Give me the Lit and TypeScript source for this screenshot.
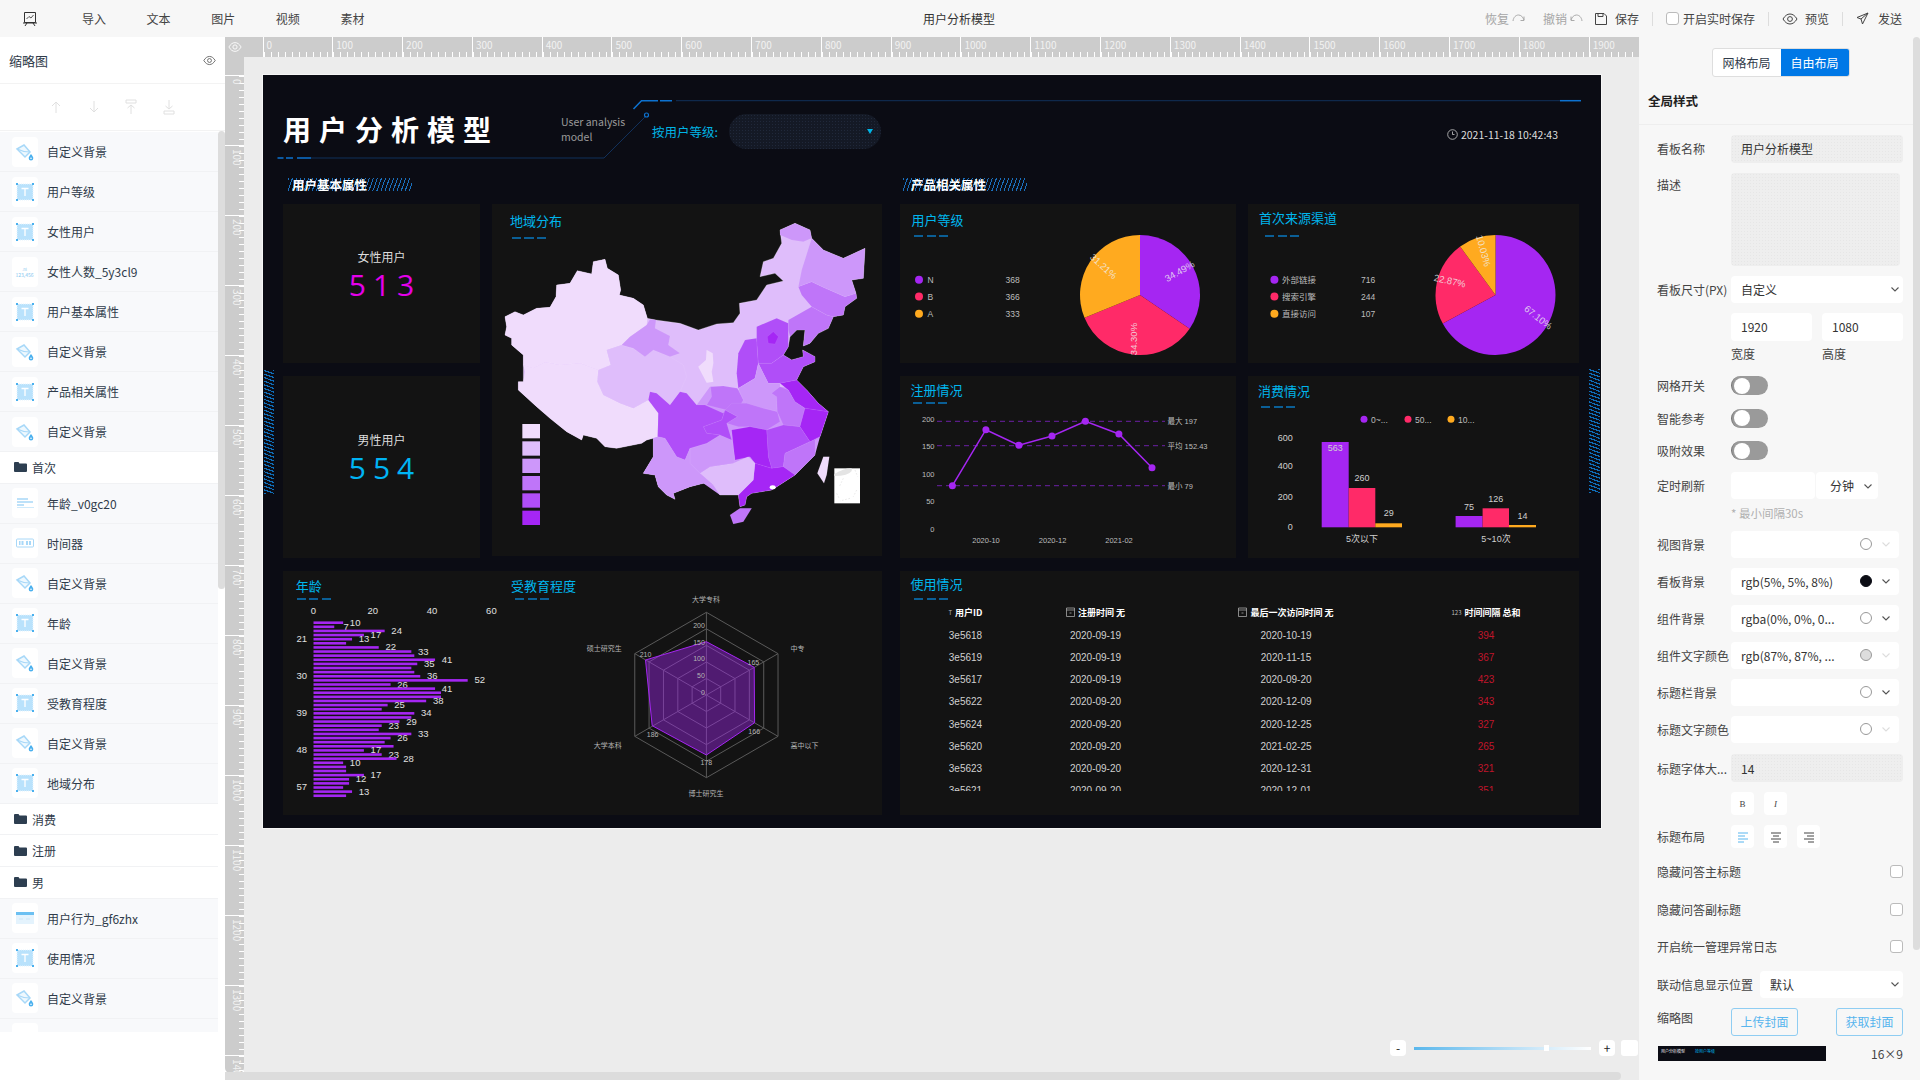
import { LitElement, html, css, svg } from "lit";
import { customElement } from "lit/decorators.js";

const PURPLE = "#a526f2";
const PINK = "#ff2a68";
const ORANGE = "#ffaa1f";
const MAP_COLORS = ["#f0dcfc", "#dfbdfb", "#cd97fa", "#bf75f9", "#b04ef8", "#a526f5"];

// left layer list
const LAYERS: [string, string][] = [
  ["bg", "自定义背景"], ["t", "用户等级"], ["t", "女性用户"], ["num", "女性人数_5y3cl9"],
  ["t", "用户基本属性"], ["bg", "自定义背景"], ["t", "产品相关属性"], ["bg", "自定义背景"],
  ["folder", "首次"], ["line", "年龄_v0gc20"], ["timer", "时间器"], ["bg", "自定义背景"],
  ["t", "年龄"], ["bg", "自定义背景"], ["t", "受教育程度"], ["bg", "自定义背景"], ["t", "地域分布"],
  ["folder", "消费"], ["folder", "注册"], ["folder", "男"],
  ["table", "用户行为_gf6zhx"], ["t", "使用情况"], ["bg", "自定义背景"], ["blank", ""],
];

const layerIcon = (k: string) => {
  switch (k) {
    case "bg":
      return svg`<svg width="20" height="20" viewBox="0 0 20 20"><path d="M2 7 9 3l6 7-5 5z" fill="#eef8fe" stroke="#a8d8f8" stroke-width="1.500"/><path d="M2 7q6 3 13 3" fill="none" stroke="#a8d8f8" stroke-width="1.200"/><path d="M16 12c1.500 2 2.300 3 2.300 4.200a2.300 2.300 0 0 1-4.600 0c0-1.200.8-2.200 2.300-4.200z" fill="#4ab0ee"/><circle cx="16" cy="16.300" r=".8" fill="#fff"/></svg>`;
    case "t":
      return svg`<svg width="20" height="20" viewBox="0 0 20 20"><rect x="2" y="2" width="16" height="16" fill="#b9e2fc" stroke="#e4f3fd" stroke-dasharray="1 1"/><path d="M6.500 6.500h7M10 6.500v7.500" stroke="#fff" stroke-width="1.300"/><path d="M1 1h2v2H1zM17 1h2v2h-2zM1 17h2v2H1zM17 17h2v2h-2z" fill="#4ab0ee"/></svg>`;
    case "num":
      return html`<span class="numico"><small>.nl</small>123,456</span>`;
    case "line":
      return svg`<svg width="20" height="20" viewBox="0 0 20 20"><path d="M2 6h11M2 9h16M2 12h7" stroke="#a8d8f8" stroke-width="1.600"/><path d="M2 14.500h17" stroke="#cfeafb"/></svg>`;
    case "timer":
      return svg`<svg width="20" height="20" viewBox="0 0 20 20"><rect x="1.500" y="6" width="17" height="8" rx="1" fill="none" stroke="#a8d8f8"/><path d="M4 8h4.500v4H4zM11 8h5v4h-5z" fill="#a8d8f8"/><path d="M6 8v4M13.500 8v4" stroke="#fff"/></svg>`;
    case "table":
      return svg`<svg width="20" height="20" viewBox="0 0 20 20"><rect x="1" y="4" width="18" height="12" fill="#e4f3fd"/><rect x="1" y="4" width="18" height="3" fill="#6cc0f2"/><path d="M4 11h4M11 11h4" stroke="#cfe6f6"/></svg>`;
    default:
      return null;
  }
};

const RULER_X = Array.from({ length: 20 }, (_, i) => i * 100);
const RULER_Y = Array.from({ length: 15 }, (_, i) => i * 100);

// map outline and polygons, traced in a 1200x1020 space
const OUTLINE =
  "45,350 75,335 100,345 140,325 180,322 198,290 200,255 240,250 262,212 305,222 310,185 345,178 352,205 385,225 392,270 388,285 430,295 460,315 472,355 498,360 570,370 625,390 680,372 730,368 750,340 748,310 800,300 830,255 880,243 855,220 810,230 820,185 850,175 875,130 870,90 915,70 960,90 965,115 1000,150 1060,175 1125,145 1120,235 1085,240 1098,280 1100,295 1065,320 1060,345 1030,350 1015,385 985,400 960,430 940,438 945,390 920,390 900,410 895,440 880,465 905,480 940,470 938,450 975,470 975,485 940,500 920,540 950,570 985,610 1015,635 990,710 975,720 975,765 915,825 845,870 785,880 770,890 765,915 750,920 745,885 690,885 670,855 640,850 600,860 550,880 555,898 530,885 505,860 495,825 460,820 490,770 490,715 470,720 455,730 380,745 345,740 320,715 280,705 275,720 230,695 180,655 140,620 85,570 85,545 100,545 100,465 65,435 65,415 45,405 50,380";
const SOUTH =
  "660,560 750,570 870,560 950,570 985,610 1015,635 990,710 975,765 915,825 845,870 745,885 690,885 640,850 600,860 550,880 505,860 495,825 460,820 490,770 490,715 505,640 540,615 620,615";
const PROVINCES: [number, string][] = [
  [0, "45,350 75,335 100,345 140,325 180,322 198,290 200,255 240,250 262,212 305,222 310,185 345,178 352,205 385,225 392,270 388,285 430,295 460,315 472,355 470,375 420,410 395,435 350,450 362,495 325,510 270,490 210,495 165,487 130,505 100,495 100,465 65,435 65,415 45,405 50,380"],
  [0, "100,495 130,505 165,487 210,495 270,490 325,510 322,545 340,585 390,610 430,625 475,600 505,640 503,710 470,720 455,730 380,745 345,740 320,715 280,705 275,720 230,695 180,655 140,620 85,570 85,545 100,545 105,515"],
  [1, "350,450 395,435 430,445 465,470 490,450 540,470 580,495 590,530 570,575 540,615 500,580 480,575 475,600 430,625 390,610 340,585 322,545 325,510 362,495"],
  [2, "395,435 420,410 470,375 480,358 498,360 495,385 540,408 535,435 570,460 540,470 490,450 465,470 430,445"],
  [0, "650,450 668,460 670,490 665,515 670,545 650,548 625,500 648,480"],
  [3, "662,560 700,558 742,565 760,600 745,625 710,630 650,615 665,590"],
  [4, "765,420 800,415 805,490 795,535 745,565 740,520 745,460"],
  [4, "800,380 860,355 895,370 895,440 880,465 845,490 805,490 800,420"],
  [5, "832,410 850,395 865,410 855,432 835,430"],
  [3, "895,360 965,320 1010,345 1030,350 1015,385 985,400 960,430 940,438 945,390 920,390 900,410 895,390"],
  [3, "925,260 965,245 1000,262 1065,290 1098,280 1100,295 1065,320 1060,345 1030,350 1010,345 965,320 935,285"],
  [2, "870,90 915,70 960,90 965,115 940,125 905,120 870,105"],
  [2, "965,115 1000,150 1060,175 1125,145 1120,235 1085,240 1098,280 1065,290 1000,262 965,245 925,260 935,210"],
  [4, "845,490 880,465 905,480 940,470 938,450 975,470 975,485 940,500 920,540 870,550 835,550 805,490"],
  [2, "745,565 795,535 805,490 835,550 870,550 870,560 860,590 862,635 820,625 770,610 760,600"],
  [3, "725,610 770,610 820,625 862,635 870,665 830,690 780,680 745,680 710,670 742,650 705,630"],
  [5, "870,550 920,540 950,570 985,610 1015,635 945,625 915,605 895,570"],
  [3, "845,580 870,560 895,570 915,605 945,625 930,680 880,675 862,635 860,590"],
  [5, "945,625 1015,635 990,710 960,725 930,680"],
  [4, "830,690 880,675 930,680 960,725 885,760 880,800 845,805 835,770"],
  [3, "960,725 990,710 975,720 975,765 915,825 880,800 885,760"],
  [5, "725,690 780,680 830,690 835,770 845,805 795,790 780,770 735,780"],
  [5, "795,790 845,805 880,800 915,825 845,870 785,880 770,890 765,915 750,920 745,885 790,840"],
  [3, "750,925 785,925 760,965 730,972 720,945"],
  [1, "630,820 660,800 730,790 775,770 795,790 790,840 745,885 690,885 670,855"],
  [2, "600,745 650,730 690,705 725,720 735,780 730,790 660,800 630,820 600,790"],
  [4, "640,680 695,660 705,630 742,650 710,670 725,720 690,705 650,700"],
  [4, "475,600 480,575 500,580 540,615 570,575 590,580 620,615 645,615 700,640 705,630 695,660 640,680 650,700 690,705 650,730 600,745 585,780 560,770 525,715 503,710 505,640"],
  [2, "490,715 503,710 525,715 560,770 585,780 600,745 600,790 630,820 670,855 640,850 600,860 550,880 555,898 530,885 505,860 495,825 460,820 490,770"],
  [0, "1000,770 1018,770 1010,825 1002,850 982,820"],
];

// [value, show label]
const AGES: [number, boolean][] = [
  [10, true], [7, true], [24, true], [17, true], [13, true], [11, false], [22, true], [33, true], [34, false], [41, true],
  [35, true], [33, false], [34, false], [36, true], [52, true], [26, true], [41, true], [43, false], [43, false], [38, true],
  [25, true], [23, false], [34, true], [33, false], [29, true], [23, true], [22, false], [33, true], [26, true], [24, false],
  [27, false], [17, true], [23, true], [28, true], [10, true], [11, false], [11, false], [17, true], [12, true], [12, false],
  [10, false], [13, true], [11, false],
];

const USAGE = [
  ["3e5618", "2020-09-19", "2020-10-19", "394"],
  ["3e5619", "2020-09-19", "2020-11-15", "367"],
  ["3e5617", "2020-09-19", "2020-09-20", "423"],
  ["3e5622", "2020-09-20", "2020-12-09", "343"],
  ["3e5624", "2020-09-20", "2020-12-25", "327"],
  ["3e5620", "2020-09-20", "2021-02-25", "265"],
  ["3e5623", "2020-09-20", "2020-12-31", "321"],
  ["3e5621", "2020-09-20", "2020-12-01", "351"],
];

const chevron = (light = false) =>
  svg`<svg class="chev" width="10" height="10" viewBox="0 0 10 10"><path d="M1.500 3.500 5 7l3.500-3.500" fill="none" stroke=${light ? "#ddd" : "#555"} stroke-width="1.100"/></svg>`;

const eye = (c = "#555", w = 16) =>
  svg`<svg width=${w} height=${w} viewBox="0 0 16 16"><path d="M1 8c2-3.300 4.300-5 7-5s5 1.700 7 5c-2 3.300-4.300 5-7 5S3 11.300 1 8z" fill="none" stroke=${c}/><circle cx="8" cy="8" r="2.400" fill="none" stroke=${c}/></svg>`;

function piePath(cx: number, cy: number, r: number, from: number, to: number) {
  const p = (a: number) => [cx + r * Math.sin(a * 2 * Math.PI), cy - r * Math.cos(a * 2 * Math.PI)];
  const [x1, y1] = p(from);
  const [x2, y2] = p(to);
  return `M${cx} ${cy}L${x1} ${y1}A${r} ${r} 0 ${to - from > 0.5 ? 1 : 0} 1 ${x2} ${y2}Z`;
}

function pie(cx: number, data: number[], labels: [string, number, number, number][]) {
  const colors = [PURPLE, PINK, ORANGE];
  let acc = 0;
  return svg`${data.map((d, i) => {
    const path = piePath(cx, 295, 60, acc, acc + d);
    acc += d;
    return svg`<path d=${path} fill=${colors[i]}/>`;
  })}
  ${labels.map(([t, x, y, r]) => svg`<text class="pie-l" x=${x} y=${y} transform="rotate(${r} ${x} ${y})">${t}</text>`)}`;
}

function legendRows(dotX: number, textX: number, valX: number, rows: [string, number][]) {
  const colors = [PURPLE, PINK, ORANGE];
  const ys = [279.7, 296.6, 313.7];
  return rows.map(
    ([t, v], i) => svg`<circle cx=${dotX} cy=${ys[i]} r="4" fill=${colors[i]}/>
      <text class="c85" x=${textX} y=${ys[i] + 3.2}>${t}</text>
      <text class="c85" x=${valX} y=${ys[i] + 3.2}>${v}</text>`
  );
}

const hexPts = (cx: number, cy: number, r: number) =>
  [0, 1, 2, 3, 4, 5]
    .map((i) => {
      const a = (i * Math.PI) / 3;
      return `${cx + r * Math.sin(a)},${cy - r * Math.cos(a)}`;
    })
    .join(" ");

@customElement("app-root")
export class AppRoot extends LitElement {
  static styles = css`
    :host {
      display: block;
      width: 1920px;
      height: 1080px;
      overflow: hidden;
      font-family: "Noto Sans CJK SC", "Open Sans", sans-serif;
      font-size: 12px;
      color: #2f3b4a;
      background: #fff;
    }
    * { box-sizing: border-box; }
    svg { display: block; }

    /* top bar */
    .topbar {
      height: 37px;
      background: #f7f7f7;
      display: flex;
      align-items: center;
      position: relative;
    }
    .logo { margin-left: 22px; }
    .menu { display: flex; margin-left: 44px; gap: 40.600px; color: #444; }
    .doc-name {
      position: absolute;
      left: 923px;
      top: 11px;
      color: #333;
      line-height: 16px;
    }
    .actions { margin-left: auto; margin-right: 18px; display: flex; align-items: center; color: #444; }
    .actions > * { flex: none; }
    .muted { color: #a6a6a6; }
    .sep { width: 1px; height: 14px; background: #ddd; margin: 0 13px; }
    .cb { width: 13px; height: 13px; border: 1px solid #bbb; border-radius: 3px; background: #fff; }
    .ic-redo { margin: 0 18px 0 3px; }
    .ic-undo { margin: 0 12px 0 3px; }
    .gap8 { margin-left: 8px; }
    .gap4 { margin-left: 4px; }
    .gap7 { margin-left: 7px; }
    .gap9 { margin-left: 9px; }

    .body { display: flex; height: 1043px; }

    /* layers */
    .left { width: 225px; flex: none; background: #fff; }
    .left-head {
      height: 47px;
      padding: 0 9px;
      display: flex;
      align-items: center;
      justify-content: space-between;
      font-size: 13px;
      border-bottom: 1px solid #f3f3f3;
    }
    .left-tools {
      height: 47px;
      display: flex;
      align-items: center;
      gap: 21.500px;
      padding-left: 48px;
      border-bottom: 1px solid #f3f3f3;
    }
    .left-main { display: flex; height: 901px; }
    .layers { width: 218px; flex: none; overflow: hidden; padding-top: 1px; }
    .layer {
      height: 40px;
      background: #f8f9fb;
      border-bottom: 1px solid #f1f2f4;
      display: flex;
      align-items: center;
      padding-left: 11.500px;
      gap: 9.500px;
      white-space: nowrap;
    }
    .icon-box {
      width: 26px;
      height: 30px;
      background: #fff;
      border-radius: 4px;
      display: flex;
      align-items: center;
      justify-content: center;
      flex: none;
    }
    .numico { font-size: 5px; color: #86c6ef; line-height: 5px; text-align: center; }
    .numico small { display: block; font-size: 4px; }
    .folder {
      height: 31.700px;
      background: #fff;
      border-bottom: 1px solid #f1f2f4;
      display: flex;
      align-items: center;
      padding-left: 14px;
      gap: 5px;
    }
    .left-scroll { width: 7px; }
    .left-scroll i { display: block; height: 458px; background: #ddd; border-radius: 4px; }

    /* canvas with rulers */
    .center {
      width: 1414px;
      flex: none;
      display: grid;
      grid-template-columns: 19px 1395px;
      grid-template-rows: 20px 1023px;
      position: relative;
    }
    .corner { background: #ccc; display: flex; align-items: center; justify-content: center; }
    .hruler, .vruler { background: #ccc; overflow: hidden; display: flex; color: #f2f2f2; font-size: 10px; }
    .hruler { padding-left: 18.500px; }
    .hruler span {
      flex: none;
      width: 69.800px;
      border-left: 1px solid #fff;
      padding-left: 3px;
      line-height: 15px;
      background: repeating-linear-gradient(90deg, #fff 0 1px, transparent 1px 7px) bottom / 100% 5px no-repeat;
    }
    .vruler { flex-direction: column; padding-top: 18px; height: 1016px; border-radius: 0 0 5px 5px; }
    .vruler span {
      flex: none;
      height: 70px;
      border-top: 1px solid #fff;
      writing-mode: vertical-rl;
      padding-top: 3px;
      line-height: 14px;
      background: repeating-linear-gradient(180deg, #fff 0 1px, transparent 1px 7px) right / 5px 100% no-repeat;
    }
    .stage { background: #ececec; padding: 18px 0 0 19px; overflow: hidden; }
    .hscroll {
      position: absolute;
      left: 0;
      bottom: 0;
      width: 1396px;
      height: 8px;
      background: #dcdcdc;
      border-radius: 0 4px 4px 0;
    }
    .zoomer {
      position: absolute;
      right: 1px;
      top: 1003px;
      display: flex;
      align-items: center;
    }
    .zbtn {
      width: 16px;
      height: 16px;
      background: #fff;
      border-radius: 4px;
      display: flex;
      align-items: center;
      justify-content: center;
      color: #222;
      font-size: 12px;
      line-height: 12px;
    }
    .ztrack {
      width: 177px;
      height: 3px;
      margin: 0 8px;
      background: linear-gradient(90deg, #5ab7ec, #cfe9f9 70%, #fff);
      position: relative;
    }
    .ztrack i { position: absolute; left: 130px; top: -2px; width: 5px; height: 6px; background: #fff; }
    .zblank { width: 17px; height: 16px; background: #fff; border-radius: 3px; margin-left: 6px; }

    /* dashboard */
    .board {
      width: 1338px;
      height: 753px;
      background: #0b0c14;
      box-shadow: 0 0 0 1px #f6f6f6;
      position: relative;
      padding-left: 20px;
      color: #ddd;
    }
    .hatch {
      position: absolute;
      top: 295px;
      width: 10px;
      height: 124px;
      background: repeating-linear-gradient(20deg, #0f6db8 0 1.200px, transparent 1.200px 3.400px);
    }
    .hatch.l { left: 1px; }
    .hatch.r { right: 1px; width: 11px; top: 294px; }
    .deco { position: absolute; left: 0; top: 0; pointer-events: none; }
    .head { height: 97px; padding: 11px 43px 0 0; display: flex; align-items: center; }
    .head > * { flex: none; }
    .title {
      font-size: 28px;
      font-weight: 700;
      letter-spacing: 8px;
      color: #fff;
      width: 216px;
      line-height: 40px;
      white-space: nowrap;
    }
    .sub { width: 72px; margin-left: 62px; color: #9a9a9a; font-size: 10.500px; line-height: 15px; }
    .filter { display: flex; align-items: center; margin: 5px 0 0 19px; color: #00b4e6; font-size: 12.500px; }
    .filter span { width: 76.600px; white-space: nowrap; }
    .pill {
      width: 152px;
      height: 35px;
      border-radius: 18px;
      background-color: #141925;
      background-image: radial-gradient(#20283a 0.6px, transparent 0.7px);
      background-size: 3px 3px;
      display: flex;
      align-items: center;
      justify-content: flex-end;
      padding-right: 8px;
    }
    .pill i {
      width: 0;
      height: 0;
      border: 3.500px solid transparent;
      border-top: 5px solid #00b4e6;
      border-bottom: 0;
    }
    .clock { margin: 11px 0 0 auto; display: flex; align-items: center; gap: 3px; font-size: 10.500px; color: #ddd; }
    .cols { display: grid; grid-template-columns: 599px 679px; column-gap: 18px; }
    .sec-row { height: 32px; padding-top: 6px; }
    .sec {
      height: 13px;
      line-height: 13px;
      width: 124px;
      margin-left: 5px;
      padding-left: 4px;
      font-size: 12.500px;
      font-weight: 700;
      color: #fff;
      white-space: nowrap;
      background: repeating-linear-gradient(110deg, #1a6fbc 0 1px, transparent 1px 3.800px);
    }
    .sec.b { margin-left: 3px; padding-left: 8px; }
    .l-top { display: grid; grid-template-columns: 197px 390px; grid-template-rows: 159px 182px; gap: 13px 12px; }
    .r-top { display: grid; grid-template-columns: 336px 331px; grid-template-rows: 159px 182px; gap: 13px 12px; }
    .card { background: #131313; display: grid; min-width: 0; min-height: 0; }
    .card > * { grid-area: 1 / 1; }
    .card > svg { width: 100%; height: 100%; }
    .map { grid-row: 1 / 3; grid-column: 2; height: 352px; }
    .bottom { margin-top: 13px; }
    .bottom .card { height: 244px; }
    .split { display: flex; background: #131313; height: 244px; }
    .split .card:first-child { width: 228px; }
    .split .card:last-child { width: 371px; }

    .ttl { padding: calc(var(--y) - 10px) 0 0 var(--x); align-self: start; position: relative; z-index: 1; }
    .ttl span { display: block; line-height: 18px; font-size: 13px; color: #00b6ee; white-space: nowrap; }
    .ttl i {
      display: block;
      width: 34px;
      height: 2px;
      margin: calc(var(--dy) - var(--y) - 9px) 0 0 var(--dx);
      background: repeating-linear-gradient(90deg, #0b5f96 0 9px, transparent 9px 12.500px);
    }
    .c-level { --x: 11.500px; --y: 16.700px; --dy: 31.700px; --dx: 2px; }
    .c-source { --x: 11px; --y: 15px; --dy: 31.700px; --dx: 6px; }
    .c-reg { --x: 10.600px; --y: 14.700px; --dy: 27px; --dx: 2.500px; }
    .c-cons { --x: 10px; --y: 16px; --dy: 30.700px; --dx: 3px; }
    .c-map { --x: 18px; --y: 17.700px; --dy: 33.700px; --dx: 2px; }
    .c-age { --x: 12.700px; --y: 15.700px; --dy: 28px; --dx: 1.500px; }
    .c-edu { --x: 0px; --y: 15.700px; --dy: 28px; --dx: 3.700px; }
    .c-use { --x: 10.600px; --y: 13.700px; --dy: 27.700px; --dx: 3.400px; display: block; }

    .kpi { display: flex; flex-direction: column; align-items: center; }
    .kpi b { font-weight: 400; font-size: 12px; color: #ddd; line-height: 16px; }
    .kpi strong {
      font-family: "Open Sans", sans-serif;
      font-weight: 400;
      font-size: 30px;
      line-height: 32px;
      letter-spacing: 7px;
      margin: 4px -7px 0 0;
    }
    .kpi.f { padding-top: 45px; }
    .kpi.f strong { color: #e400ea; }
    .kpi.m { padding-top: 56px; }
    .kpi.m strong { color: #00b4f4; }

    .usage {
      display: grid;
      grid-template-columns: 131px 129px 252px 148px;
      grid-template-rows: 24px;
      grid-auto-rows: 22.200px;
      height: 190.800px;
      margin-top: 0.500px;
      overflow: hidden;
      font-size: 10px;
      font-family: "Liberation Sans", "Noto Sans CJK SC", sans-serif;
      color: #d0d0d0;
    }
    .usage > div { display: flex; align-items: center; justify-content: center; gap: 3px; white-space: nowrap; }
    .usage .th { color: #fff; font-weight: 700; font-size: 9px; font-family: "Noto Sans CJK SC", sans-serif; }
    .usage .th em { font-style: normal; font-weight: 400; font-size: 6px; color: #bbb; }
    .usage .th svg { flex: none; }
    .usage .red { color: #c0152b; }

    text { font-family: "Liberation Sans", "Noto Sans CJK SC", sans-serif; }
    .c7 { font-size: 7px; fill: #b5b5b5; }
    .c75 { font-size: 7.500px; fill: #bdbdbd; }
    .c85 { font-size: 8.500px; fill: #bdbdbd; }
    .c9 { font-size: 9px; fill: #cfcfcf; }
    .c95 { font-size: 9.500px; fill: #e0e0e0; }
    .pie-l { font-size: 9.500px; fill: #f0f0f0; fill-opacity: 0.8; text-anchor: middle; dominant-baseline: middle; }
    .mid { text-anchor: middle; }
    .end { text-anchor: end; }

    /* right form */
    .right { width: 281px; flex: none; background: #f7f7f7; position: relative; height: 1043px; }
    .right-scroll { position: absolute; right: 0; top: 0; width: 7px; height: 913px; background: #ddd; border-radius: 4px; }
    .tabs {
      display: flex;
      width: 138px;
      height: 29px;
      margin: 10.500px 0 0 72.500px;
      border: 1px solid #dedede;
      border-radius: 3px;
      overflow: hidden;
      background: #fff;
    }
    .tabs span { flex: 1; display: flex; align-items: center; justify-content: center; }
    .tabs .on { background: #0078e6; color: #fff; }
    .right-title {
      height: 48px;
      padding-left: 9px;
      display: flex;
      align-items: center;
      font-size: 12.500px;
      font-weight: 700;
      color: #222;
      border-bottom: 1px solid #eee;
    }
    .form { display: flex; flex-direction: column; gap: 10px; padding: 10px 17px 0 18px; color: #444; }
    .row { display: flex; align-items: center; height: 27px; }
    .row > label { width: 74px; flex: none; white-space: nowrap; }
    .row.top { align-items: flex-start; }
    .field {
      height: 100%;
      flex: 1;
      min-width: 0;
      background: #fff;
      border-radius: 4px;
      display: flex;
      align-items: center;
      padding: 0 10px;
      color: #333;
      white-space: nowrap;
    }
    .field.ro {
      background-color: #eee;
      background-image: radial-gradient(#e6e6e6 0.5px, transparent 0.6px);
      background-size: 3px 3px;
    }
    .name { height: 28px; }
    .after-colors { margin-top: 1.500px; }
    .desc { height: 93px; }
    .desc label { padding-top: 3px; }
    .desc .field { margin-right: 3px; }
    .size .field, .linkage .field { padding-right: 3px; }
    .size .chev, .linkage .chev { margin-left: auto; }
    .dims { height: 52px; display: block; padding-left: 74px; }
    .dims div { display: flex; gap: 10px; }
    .dims .field { height: 28px; flex: none; width: 81px; }
    .dims p { margin: 6px 0 0; line-height: 14px; display: flex; gap: 10px; }
    .dims p span { width: 81px; }
    .switch { height: 22.500px; }
    .toggle { width: 37px; height: 19px; border-radius: 10px; background: #9a9a9a; border-left: 1px solid #777; padding: 1.500px; }
    .toggle i { display: block; width: 16px; height: 16px; border-radius: 50%; background: #fff; }
    .refresh { height: 48.500px; display: block; }
    .refresh > div { display: flex; align-items: center; height: 27px; }
    .refresh label { width: 74px; flex: none; }
    .refresh .amount { width: 84px; flex: none; }
    .refresh .unit { width: 62px; flex: none; margin-left: 1px; padding: 0 5px 0 14px; justify-content: space-between; }
    .refresh p { margin: 7px 0 0 74px; line-height: 14px; color: #b0b0b0; font-size: 11.500px; }
    .color .field { margin-right: 4px; padding-right: 8px; overflow: hidden; }
    .color .dot { margin-left: auto; width: 12px; height: 12px; border-radius: 50%; border: 1px solid #999; flex: none; margin-right: 9px; }
    .color .dot.black { background: #0b0c14; border-color: #0b0c14; }
    .color .dot.grey { background: #ddd; }
    .btns { height: 23px; padding-left: 74px; gap: 10px; }
    .btns i {
      width: 23px;
      height: 100%;
      background: #fff;
      border-radius: 4px;
      display: flex;
      align-items: center;
      justify-content: center;
      font-size: 9px;
      font-style: normal;
      font-family: "Liberation Serif", serif;
      color: #444;
    }
    .btns.layout { padding-left: 0; }
    .btns.layout label { margin-right: -10px; }
    .check { height: 27.500px; justify-content: space-between; }
    .check label { width: auto; }
    .linkage label { width: 103px; }
    .thumbs { height: 28px; align-items: flex-start; }
    .upload {
      width: 67px;
      height: 28px;
      border: 1px solid #8fcdf2;
      border-radius: 3px;
      display: flex;
      align-items: center;
      justify-content: center;
      color: #58b5ee;
    }
    .upload.last { margin-left: auto; }
    .thumbs label { padding-top: 1px; }
    .preview { height: 15px; justify-content: space-between; }
    .mini {
      width: 168px;
      height: 15px;
      margin-left: 1px;
      background: #0b0c14;
      color: #eee;
      font-size: 4px;
      line-height: 5px;
      padding: 3px 0 0 3px;
      overflow: hidden;
      display: flex;
      gap: 10px;
      white-space: nowrap;
    }
    .mini em { font-style: normal; color: #00b4e6; }
  `;

  private renderTop() {
    return html`<header class="topbar">
      <svg class="logo" width="16" height="16" viewBox="0 0 16 16" fill="none" stroke="#333"><path d="M2.500 1.500h11v10h-11zM1 12h14M5 12l-2 3M11 12l2 3"/><path d="M4.500 8l2.500-2.500 2 1.500 2.500-3" stroke="#555"/></svg>
      <nav class="menu"><span>导入</span><span>文本</span><span>图片</span><span>视频</span><span>素材</span></nav>
      <div class="doc-name">用户分析模型</div>
      <div class="actions">
        <span class="muted">恢复</span>
        <svg class="ic-redo" width="13" height="13" viewBox="0 0 13 13" fill="none" stroke="#aaa"><path d="M1 9c.5-4 3-6 5.500-6S11 5 12 8M12 4.500V8.500H8.500"/></svg>
        <span class="muted">撤销</span>
        <svg class="ic-undo" width="13" height="13" viewBox="0 0 13 13" fill="none" stroke="#aaa"><path d="M12 9c-.5-4-3-6-5.500-6S2 5 1 8M1 4.500V8.500H4.500"/></svg>
        <svg width="12" height="12" viewBox="0 0 12 12" fill="none" stroke="#444"><path d="M.5.500h8.500l2.500 2.500v8.500H.5zM3 .5v3h5v-3"/></svg>
        <span class="gap8">保存</span>
        <i class="sep"></i>
        <i class="cb"></i>
        <span class="gap4">开启实时保存</span>
        <i class="sep"></i>
        ${eye("#444")}
        <span class="gap7">预览</span>
        <i class="sep"></i>
        <svg width="13" height="13" viewBox="0 0 13 13" fill="none" stroke="#444"><path d="M12 1 1 5.500l4 1.500 1.500 5zM5 7l7-6"/></svg>
        <span class="gap9">发送</span>
      </div>
    </header>`;
  }

  private renderLeft() {
    return html`<aside class="left">
      <div class="left-head"><span>缩略图</span>${eye("#555", 13)}</div>
      <div class="left-tools">
        ${["M8 14V3M4 7l4-4 4 4", "M8 2v11M4 9l4 4 4-4", "M3 1h10v3H3zM8 15V6M4.500 9 8 6l3.500 3", "M3 12h10v3H3zM8 1v9M4.500 7 8 10l3.500-3"].map(
          (d) => svg`<svg width="16" height="16" viewBox="0 0 16 16" fill="none" stroke="#e0e0e0"><path d=${d}/></svg>`
        )}
      </div>
      <div class="left-main">
        <div class="layers">
          ${LAYERS.map(([k, t]) =>
            k === "folder"
              ? html`<div class="folder"><svg width="13" height="10" viewBox="0 0 13 10"><path d="M0 1a1 1 0 0 1 1-1h3.500l1 1.500H12a1 1 0 0 1 1 1V9a1 1 0 0 1-1 1H1a1 1 0 0 1-1-1z" fill="#2d3e50"/></svg>${t}</div>`
              : html`<div class="layer"><span class="icon-box">${layerIcon(k)}</span>${t}</div>`
          )}
        </div>
        <div class="left-scroll"><i></i></div>
      </div>
    </aside>`;
  }

  private renderMap() {
    return svg`<svg viewBox="492 204 390 352">
      <g transform="translate(490 200) scale(.33333)">
        <polygon points=${OUTLINE} fill=${MAP_COLORS[1]} stroke="#fff" stroke-opacity=".5" stroke-width="1.500"/>
        <polygon points=${SOUTH} fill=${MAP_COLORS[2]}/>
        ${PROVINCES.map(([l, p]) => svg`<polygon points=${p} fill=${MAP_COLORS[l]} stroke="#fff" stroke-opacity=".12" stroke-width="1.500"/>`)}
        <ellipse cx="848" cy="862" rx="9" ry="6" fill="#fff"/>
        <rect x="1033" y="805" width="77" height="105" fill="#fff"/>
        <path d="M1033 822q30-18 52-17v8q-10 15-52 15z" fill="#e4e4e4"/>
        <path d="M1095 810l8 20M1060 835l-12 25M1080 895l-30 8M1100 870l-10 20M1040 880l8 16" stroke="#bbb" stroke-dasharray="5 5" fill="none"/>
        ${MAP_COLORS.map((c, i) => svg`<rect x="97" y=${672 + i * 52} width="53" height="43" fill=${c}/>`)}
      </g>
    </svg>`;
  }

  private renderLine() {
    const pts: [number, number][] = [[952.4, 485.7], [985.9, 429.7], [1018.9, 445.3], [1052, 436], [1085.4, 421.3], [1118.9, 434], [1152, 467.7]];
    return svg`<svg viewBox="900 376 336 182">
      ${[["200", 421.5], ["150", 449.2], ["100", 476.5], ["50", 503.5], ["0", 531.500]].map(([t, y]) => svg`<text class="c75 end" x="934.500" y=${y}>${t}</text>`)}
      ${[[421.3, "最大 197"], [445.7, "平均 152.43"], [485.7, "最小 79"]].map(
        ([y, t]) => svg`<path d="M937 ${y}H1165" stroke="#6c20a6" stroke-dasharray="5 4"/><text class="c75" x="1167.500" y=${(y as number) + 3}>${t}</text>`
      )}
      <polyline points=${pts.map((p) => p.join(",")).join(" ")} fill="none" stroke=${PURPLE} stroke-width="1.500"/>
      ${pts.map(([x, y]) => svg`<circle cx=${x} cy=${y} r="3.500" fill=${PURPLE}/>`)}
      ${[["2020-10", 986], ["2020-12", 1052.6], ["2021-02", 1119]].map(([t, x]) => svg`<text class="c75 mid" x=${x} y="542.500">${t}</text>`)}
    </svg>`;
  }

  private renderBars() {
    const bars: [number, number, number, string, number, string][] = [
      [1321.7, 27, 442, PURPLE, 450.500, "563"],
      [1348.7, 26.6, 488, PINK, 481.200, "260"],
      [1375.3, 26.7, 523.3, ORANGE, 516.200, "29"],
      [1455.6, 27, 516, PURPLE, 510.200, "75"],
      [1482.6, 26.4, 508.3, PINK, 501.500, "126"],
      [1509, 27, 525, ORANGE, 519.200, "14"],
    ];
    return svg`<svg viewBox="1248 376 331 182">
      ${[[1364, PURPLE, "0~..."], [1408, PINK, "50..."], [1451, ORANGE, "10..."]].map(
        ([x, c, t]) => svg`<circle cx=${x} cy="419.300" r="3.500" fill=${c}/><text class="c85" x=${(x as number) + 7} y="422.500">${t}</text>`
      )}
      ${[["600", 441], ["400", 469], ["200", 500], ["0", 530]].map(([t, y]) => svg`<text class="c9 end" x="1292.700" y=${y}>${t}</text>`)}
      ${bars.map(
        ([x, w, top, c, ly, t]) => svg`<rect x=${x} y=${top} width=${w} height=${527.300 - top} fill=${c}/>
          <text class="c9 mid" x=${x + w / 2} y=${ly}>${t}</text>`
      )}
      <text class="c9 mid" x="1362" y="542">5次以下</text>
      <text class="c9 mid" x="1496" y="542">5~10次</text>
    </svg>`;
  }

  private renderAge() {
    return svg`<svg viewBox="283 571 228 244">
      ${[["0", 313.5], ["20", 372.8], ["40", 432], ["60", 491.4]].map(([t, x]) => svg`<text class="c95 mid" x=${x} y="614">${t}</text>`)}
      ${[["21", 642.2], ["30", 678.8], ["39", 715.8], ["48", 752.8], ["57", 789.8]].map(([t, y]) => svg`<text class="c95 end" x="307" y=${y}>${t}</text>`)}
      ${AGES.map(([v, show], i) => {
        const y = 622.7 + i * 4.12;
        const end = 313.5 + v * 2.965;
        return svg`<rect x="313.500" y=${y - 1.3} width=${v * 2.965} height="2.600" fill=${PURPLE}/>
          ${show ? svg`<text class="c95 mid" x=${end + 12} y=${y + 3}>${v}</text>` : null}`;
      })}
    </svg>`;
  }

  private renderRadar() {
    const cx = 706.4;
    const cy = 695;
    const poly = "706.4,641.7 754.2,667.3 754.6,722.7 706.4,755 652.2,725.7 645.5,660";
    return svg`<svg viewBox="511 571 371 244">
      ${[16.5, 33, 49.6, 66.2, 82.7].map((r) => svg`<polygon points=${hexPts(cx, cy, r)} fill="none" stroke="#5a5a5a"/>`)}
      ${[0, 1, 2, 3, 4, 5].map((i) => {
        const a = (i * Math.PI) / 3;
        return svg`<path d="M${cx} ${cy}L${cx + 82.7 * Math.sin(a)} ${cy - 82.7 * Math.cos(a)}" stroke="#5a5a5a"/>`;
      })}
      <polygon points=${poly} fill=${PURPLE} fill-opacity=".42" stroke=${PURPLE}/>
      ${[["大学专科", 706, 602, "mid"], ["中专", 790.5, 650.500, ""], ["高中以下", 790.5, 747.500, ""], ["博士研究生", 706, 796, "mid"], ["大学本科", 621.8, 747.500, "end"], ["硕士研究生", 621.8, 650.500, "end"]].map(
        ([t, x, y, c]) => svg`<text class="c7 ${c}" x=${x} y=${y}>${t}</text>`
      )}
      ${[["200", 699, 627.500], ["150", 699, 644.500], ["100", 699, 661], ["50", 701, 677.500], ["0", 703, 694.500]].map(
        ([t, x, y]) => svg`<text class="c7 mid" x=${x} y=${y}>${t}</text>`
      )}
      ${[["210", 645.500, 657], ["165", 753.400, 664.500], ["166", 754.200, 733.500], ["178", 706.400, 764.500], ["186", 652.600, 737]].map(
        ([t, x, y]) => svg`<text class="c7 mid" x=${x} y=${y}>${t}</text>`
      )}
    </svg>`;
  }

  private renderTable() {
    const cal = svg`<svg width="9" height="10" viewBox="0 0 9 10" fill="none" stroke="#bbb" stroke-width=".7"><path d="M.5 1h8v8.500h-8zM.5 3h8M3.500 6h2"/></svg>`;
    return html`<div class="usage">
      <div class="th"><em>T</em>用户ID</div>
      <div class="th">${cal}注册时间 无</div>
      <div class="th">${cal}最后一次访问时间 无</div>
      <div class="th"><em>123</em>时间间隔 总和</div>
      ${USAGE.map(
        (r) => html`<div>${r[0]}</div><div>${r[1]}</div><div>${r[2]}</div><div class="red">${r[3]}</div>`
      )}
    </div>`;
  }

  private ttl(t: string) {
    return html`<div class="ttl"><span>${t}</span><i></i></div>`;
  }

  private renderBoard() {
    return html`<div class="board">
      <i class="hatch l"></i><i class="hatch r"></i>
      <svg class="deco" width="1338" height="100" viewBox="263 75 1338 100" fill="none">
        <path d="M277.500 158h6M286 158h7M297 158h14" stroke="#0d72d0" stroke-width="1.500"/>
        <path d="M311 158H604L645 117" stroke="#11305a"/>
        <circle cx="646.500" cy="115" r="2" stroke="#0d72d0" stroke-width="1.200"/>
        <path d="M633.500 109l8-8.300H658M660 100.700h12" stroke="#0d72d0" stroke-width="1.500"/>
        <path d="M676 100.700H1560" stroke="#11305a"/>
        <path d="M1560 100.700h21" stroke="#0d72d0" stroke-width="1.500"/>
      </svg>
      <div class="head">
        <div class="title">用户分析模型</div>
        <div class="sub">User analysis model</div>
        <div class="filter"><span>按用户等级:</span><div class="pill"><i></i></div></div>
        <div class="clock">
          <svg width="11" height="11" viewBox="0 0 11 11" fill="none" stroke="#ccc" stroke-width=".8"><circle cx="5.500" cy="5.500" r="4.800"/><path d="M5.500 2.500v3h2"/></svg>
          2021-11-18 10:42:43
        </div>
      </div>
      <div class="cols sec-row">
        <div class="sec">用户基本属性</div>
        <div class="sec b">产品相关属性</div>
      </div>
      <div class="cols">
        <div class="l-top">
          <section class="card"><div class="kpi f"><b>女性用户</b><strong>513</strong></div></section>
          <section class="card c-map map">${this.ttl("地域分布")}${this.renderMap()}</section>
          <section class="card"><div class="kpi m"><b>男性用户</b><strong>554</strong></div></section>
        </div>
        <div class="r-top">
          <section class="card c-level">
            ${this.ttl("用户等级")}
            <svg viewBox="900 204 336 159">
              ${legendRows(919, 927.6, 1005.6, [["N", 368], ["B", 366], ["A", 333]])}
              ${pie(1140, [0.3449, 0.343, 0.3121], [["34.49%", 1180, 272, -30], ["34.30%", 1134.5, 339, -90], ["31.21%", 1103, 267, 42]])}
            </svg>
          </section>
          <section class="card c-source">
            ${this.ttl("首次来源渠道")}
            <svg viewBox="1248 204 331 159">
              ${legendRows(1274.4, 1282, 1361, [["外部链接", 716], ["搜索引擎", 244], ["直接访问", 107]])}
              ${pie(1495.5, [0.671, 0.2287, 0.1003], [["67.10%", 1537.7, 318, 38], ["22.87%", 1449.6, 281.7, 12], ["10.03%", 1482.7, 251, 75]])}
            </svg>
          </section>
          <section class="card c-reg">${this.ttl("注册情况")}${this.renderLine()}</section>
          <section class="card c-cons">${this.ttl("消费情况")}${this.renderBars()}</section>
        </div>
      </div>
      <div class="cols bottom">
        <div class="split">
          <section class="card c-age">${this.ttl("年龄")}${this.renderAge()}</section>
          <section class="card c-edu">${this.ttl("受教育程度")}${this.renderRadar()}</section>
        </div>
        <section class="card c-use">${this.ttl("使用情况")}${this.renderTable()}</section>
      </div>
    </div>`;
  }

  private colorRow(label: string, value: string, dot = "", light = false) {
    return html`<div class="row color"><label>${label}</label>
      <div class="field">${value}<i class="dot ${dot}"></i>${chevron(light)}</div></div>`;
  }

  private renderRight() {
    return html`<aside class="right">
      <i class="right-scroll"></i>
      <div class="tabs"><span>网格布局</span><span class="on">自由布局</span></div>
      <div class="right-title">全局样式</div>
      <div class="form">
        <div class="row name"><label>看板名称</label><div class="field ro">用户分析模型</div></div>
        <div class="row top desc"><label>描述</label><div class="field ro"></div></div>
        <div class="row size"><label>看板尺寸(PX)</label><div class="field">自定义${chevron()}</div></div>
        <div class="dims">
          <div><span class="field">1920</span><span class="field">1080</span></div>
          <p><span>宽度</span><span>高度</span></p>
        </div>
        ${["网格开关", "智能参考", "吸附效果"].map(
          (t) => html`<div class="row switch"><label>${t}</label><div class="toggle"><i></i></div></div>`
        )}
        <div class="refresh">
          <div><label>定时刷新</label><span class="field amount"></span><span class="field unit">分钟${chevron()}</span></div>
          <p>* 最小间隔30s</p>
        </div>
        ${this.colorRow("视图背景", "", "", true)}
        ${this.colorRow("看板背景", "rgb(5%, 5%, 8%)", "black")}
        ${this.colorRow("组件背景", "rgba(0%, 0%, 0...")}
        ${this.colorRow("组件文字颜色", "rgb(87%, 87%, ...", "grey", true)}
        ${this.colorRow("标题栏背景", "")}
        ${this.colorRow("标题文字颜色", "", "", true)}
        <div class="row name after-colors"><label>标题字体大...</label><div class="field ro">14</div></div>
        <div class="row btns"><i>B</i><i><em>I</em></i></div>
        <div class="row btns layout">
          <label>标题布局</label>
          ${["M2 3h10M2 6h7M2 9h10M2 12h6", "M2 3h10M4 6h6M2 9h10M4 12h6", "M2 3h10M5 6h7M2 9h10M6 12h6"].map(
            (d, i) => html`<i><svg width="14" height="14" viewBox="0 0 14 14" fill="none" stroke=${i === 0 ? "#58b5ee" : "#444"}><path d=${d}/></svg></i>`
          )}
        </div>
        ${["隐藏问答主标题", "隐藏问答副标题", "开启统一管理异常日志"].map(
          (t) => html`<div class="row check"><label>${t}</label><i class="cb"></i></div>`
        )}
        <div class="row linkage"><label>联动信息显示位置</label><div class="field">默认${chevron()}</div></div>
        <div class="row thumbs"><label>缩略图</label><span class="upload">上传封面</span><span class="upload last">获取封面</span></div>
        <div class="row preview">
          <div class="mini"><span>用户分析模型</span><em>按用户等级</em></div>
          <span>16×9</span>
        </div>
      </div>
    </aside>`;
  }

  render() {
    return html`
      ${this.renderTop()}
      <div class="body">
        ${this.renderLeft()}
        <main class="center">
          <div class="corner">${eye("#fff", 14)}</div>
          <div class="hruler">${RULER_X.map((n) => html`<span>${n}</span>`)}</div>
          <div class="vruler">${RULER_Y.map((n) => html`<span>${n}</span>`)}</div>
          <div class="stage">${this.renderBoard()}</div>
          <div class="hscroll"></div>
          <div class="zoomer">
            <span class="zbtn">-</span>
            <span class="ztrack"><i></i></span>
            <span class="zbtn">+</span>
            <span class="zblank"></span>
          </div>
        </main>
        ${this.renderRight()}
      </div>
    `;
  }
}
